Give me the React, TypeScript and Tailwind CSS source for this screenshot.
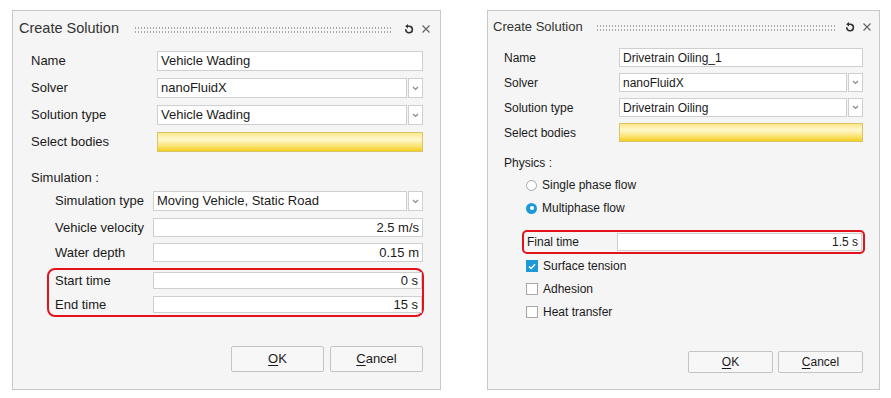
import React from "react";

const font = "font-['Liberation_Sans',Arial,sans-serif]";

const Dots = () => (
	<div className="flex-1 h-[7px] bg-[radial-gradient(circle,#a8a8a8_0.8px,transparent_1px)] bg-[length:3px_4px] bg-repeat" />
);

const HeaderIcons = () => (
	<div className="flex items-center gap-[7px] text-[#444]">
		<svg width="10" height="10" viewBox="0 0 10 10" fill="none">
			<path
				d="M3.2 2.2 H5.2 A3.3 3.3 0 1 1 1.8 5.8"
				stroke="#333"
				strokeWidth="1.6"
				strokeLinecap="round"
			/>
			<path d="M1.2 2.2 L4 0 L4 4.4 Z" fill="#333" />
		</svg>
		<svg width="10" height="10" viewBox="0 0 10 10">
			<path d="M1.5 1.5 L8.5 8.5 M8.5 1.5 L1.5 8.5" stroke="#666" strokeWidth="1.2" />
		</svg>
	</div>
);

const TextBox = ({
	value = "",
	right = false,
	className = "",
}: {
	value?: string;
	right?: boolean;
	className?: string;
}) => (
	<div
		className={`flex-1 h-full bg-white border border-[#cfcfcf] flex items-center px-[3px] text-[#1a1a1a] whitespace-nowrap overflow-hidden ${
			right ? "justify-end" : ""
		} ${className}`}
	>
		{value}
	</div>
);

const Combo = ({ value }: { value: string }) => (
	<div className="flex-1 h-full flex gap-[1px]">
		<TextBox value={value} />
		<div className="w-[15px] h-full bg-white border border-[#cfcfcf] flex items-center justify-center">
			<svg width="7" height="5" viewBox="0 0 7 5">
				<path d="M1 1 L3.5 3.5 L6 1" stroke="#888" strokeWidth="1.2" fill="none" />
			</svg>
		</div>
	</div>
);

const Bodies = () => (
	<div className="flex-1 h-full border border-[#d9c46a] bg-[linear-gradient(#fde78a,#fff8cf_35%,#fbe57a_70%,#f3cf1e)]" />
);

const Button = ({
	first,
	rest,
	className,
}: {
	first: string;
	rest: string;
	className: string;
}) => (
	<div
		className={`border border-[#c4c4c4] rounded-[2px] bg-[#f7f7f7] flex items-center justify-center text-[#1a1a1a] ${className}`}
	>
		<span className="underline underline-offset-2">{first}</span>
		{rest}
	</div>
);

const Row = ({
	label,
	labelW,
	h,
	children,
	className = "",
}: {
	label: string;
	labelW: string;
	h: string;
	children: React.ReactNode;
	className?: string;
}) => (
	<div className={`flex items-center ${h} ${className}`}>
		<div className={`${labelW} shrink-0 text-[#1a1a1a] whitespace-nowrap`}>{label}</div>
		{children}
	</div>
);

const WadingDialog = () => (
	<div className="w-[429px] h-[380px] border border-[#c8c8c8] bg-[#f5f5f5] flex flex-col text-[13px]">
		<div className="h-[36px] flex items-center pl-[6px] pr-[9px]">
			<span className="text-[14.5px] text-[#333]">Create Solution</span>
			<div className="flex-1 ml-[15px] mr-[11px] flex">
				<Dots />
			</div>
			<HeaderIcons />
		</div>

		<div className="pl-[18px] pr-[17px] mt-[4px] flex flex-col gap-[7px]">
			<Row label="Name" labelW="w-[126px]" h="h-[20px]">
				<TextBox value="Vehicle Wading" />
			</Row>
			<Row label="Solver" labelW="w-[126px]" h="h-[20px]">
				<Combo value="nanoFluidX" />
			</Row>
			<Row label="Solution type" labelW="w-[126px]" h="h-[20px]">
				<Combo value="Vehicle Wading" />
			</Row>
			<Row label="Select bodies" labelW="w-[126px]" h="h-[20px]">
				<Bodies />
			</Row>
		</div>

		<div className="pl-[18px] mt-[17px] h-[18px] flex items-center text-[#1a1a1a]">Simulation :</div>

		<div className="pl-[42px] pr-[17px]">
			<Row label="Simulation type" labelW="w-[98px]" h="h-[20px]" className="mt-[4px]">
				<Combo value="Moving Vehicle, Static Road" />
			</Row>
			<Row label="Vehicle velocity" labelW="w-[98px]" h="h-[19px]" className="mt-[7px]">
				<TextBox value="2.5 m/s" right />
			</Row>
			<Row label="Water depth" labelW="w-[98px]" h="h-[19px]" className="mt-[6px]">
				<TextBox value="0.15 m" right />
			</Row>
		</div>

		<div className="ml-[34px] mr-[16px] mt-[6px] border-2 border-[#e3121c] rounded-[8px] pl-[6px] py-[2px] flex flex-col gap-[7px]">
			<Row label="Start time" labelW="w-[98px]" h="h-[17px]">
				<TextBox value="0 s" right />
			</Row>
			<Row label="End time" labelW="w-[98px]" h="h-[17px]">
				<TextBox value="15 s" right />
			</Row>
		</div>

		<div className="mt-[29px] pr-[17px] flex justify-end gap-[6px]">
			<Button first="O" rest="K" className="w-[93px] h-[26px]" />
			<Button first="C" rest="ancel" className="w-[93px] h-[26px]" />
		</div>
	</div>
);

const Radio = ({ checked }: { checked?: boolean }) =>
	checked ? (
		<div className="w-[11px] h-[11px] rounded-full bg-[#1d9ad6] flex items-center justify-center">
			<div className="w-[4px] h-[4px] rounded-full bg-white" />
		</div>
	) : (
		<div className="w-[11px] h-[11px] rounded-full bg-white border border-[#a8a8a8]" />
	);

const Check = ({ checked }: { checked?: boolean }) =>
	checked ? (
		<div className="w-[12px] h-[12px] bg-[#1d9ad6] flex items-center justify-center">
			<svg width="8" height="7" viewBox="0 0 8 7">
				<path d="M1 3.6 L3.1 5.6 L7 1.2" stroke="white" strokeWidth="1.4" fill="none" />
			</svg>
		</div>
	) : (
		<div className="w-[12px] h-[12px] bg-white border border-[#a8a8a8]" />
	);

const Option = ({ mark, label, className = "" }: { mark: React.ReactNode; label: string; className?: string }) => (
	<div className={`h-[18px] flex items-center gap-[5px] pl-[38px] text-[#1a1a1a] ${className}`}>
		{mark}
		<span>{label}</span>
	</div>
);

const OilingDialog = () => (
	<div className="w-[393px] h-[380px] border border-[#c8c8c8] bg-[#f5f5f5] flex flex-col text-[12px]">
		<div className="h-[32px] flex items-center pl-[5px] pr-[7px]">
			<span className="text-[13px] text-[#333]">Create Solution</span>
			<div className="flex-1 ml-[13px] mr-[9px] flex">
				<Dots />
			</div>
			<HeaderIcons />
		</div>

		<div className="pl-[16px] pr-[16px] mt-[5px] flex flex-col gap-[6px]">
			<Row label="Name" labelW="w-[115px]" h="h-[19px]">
				<TextBox value="Drivetrain Oiling_1" />
			</Row>
			<Row label="Solver" labelW="w-[115px]" h="h-[19px]">
				<Combo value="nanoFluidX" />
			</Row>
			<Row label="Solution type" labelW="w-[115px]" h="h-[19px]">
				<Combo value="Drivetrain Oiling" />
			</Row>
			<Row label="Select bodies" labelW="w-[115px]" h="h-[19px]">
				<Bodies />
			</Row>
		</div>

		<div className="pl-[16px] mt-[13px] h-[16px] flex items-center text-[#1a1a1a]">Physics :</div>

		<Option mark={<Radio />} label="Single phase flow" className="mt-[5px]" />
		<Option mark={<Radio checked />} label="Multiphase flow" className="mt-[5px]" />

		<div className="ml-[34px] mr-[14px] mt-[13px] border-2 border-[#e3121c] rounded-[5px] pl-[3px] pr-[1px] py-[1px]">
			<Row label="Final time" labelW="w-[90px]" h="h-[18px]">
				<TextBox value="1.5 s" right />
			</Row>
		</div>

		<Option mark={<Check checked />} label="Surface tension" className="mt-[3px]" />
		<Option mark={<Check />} label="Adhesion" className="mt-[5px]" />
		<Option mark={<Check />} label="Heat transfer" className="mt-[5px]" />

		<div className="mt-[30px] pr-[16px] flex justify-end gap-[5px]">
			<Button first="O" rest="K" className="w-[85px] h-[22px]" />
			<Button first="C" rest="ancel" className="w-[85px] h-[22px]" />
		</div>
	</div>
);

export default function App() {
	return (
		<div className={`w-[891px] h-[398px] bg-white flex items-start pt-[10px] pl-[12px] gap-[46px] ${font}`}>
			<WadingDialog />
			<OilingDialog />
		</div>
	);
}
